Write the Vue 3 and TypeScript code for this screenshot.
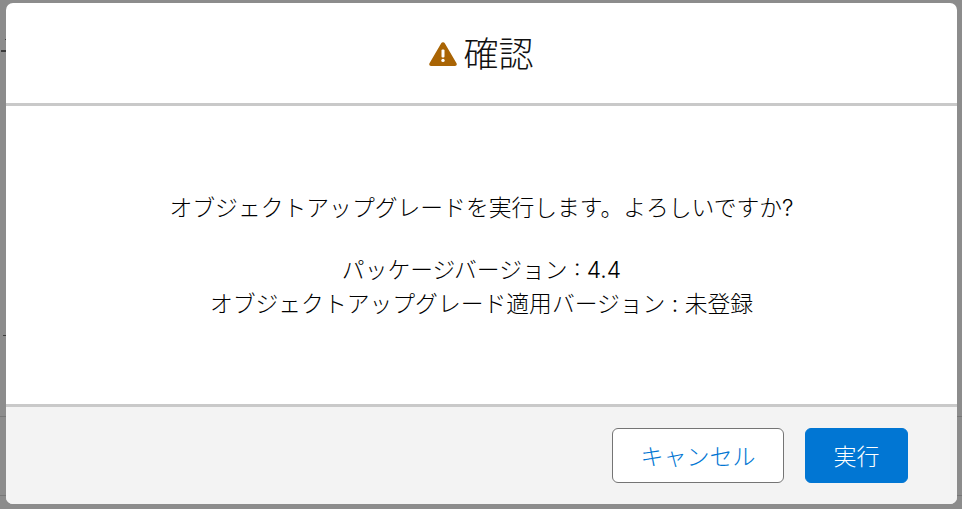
<template>
  <div class="backdrop">
    <span class="bg-mark mark-top" />
    <span class="bg-mark mark-upper" />
    <span class="bg-mark mark-mid" />
    <span class="bg-line line-a" />
    <span class="bg-line line-b" />
    <section class="modal" role="dialog" aria-modal="true">
      <header class="modal-header">
        <svg class="warn-icon" width="28" height="24" viewBox="0 0 28 24" aria-hidden="true">
          <path
            d="M14 .3c-.8 0-1.4.4-1.8 1L.5 21.3c-.7 1.2.1 2.7 1.5 2.7h24c1.4 0 2.2-1.5 1.5-2.7L15.8 1.3c-.4-.6-1-1-1.8-1z"
            fill="#a96404"
          />
          <rect x="12.5" y="7.5" width="3" height="8" rx="1" fill="#fff" />
          <circle cx="14" cy="18.4" r="1.7" fill="#fff" />
        </svg>
        <h2 class="title">確認</h2>
      </header>
      <div class="modal-body">
        <p class="lead">{{ message }}</p>
        <p v-for="line in details" :key="line" class="detail">{{ line }}</p>
      </div>
      <footer class="modal-footer">
        <button type="button" class="btn btn-neutral">キャンセル</button>
        <button type="button" class="btn btn-brand">実行</button>
      </footer>
    </section>
  </div>
</template>

<script setup lang="ts">
const message = 'オブジェクトアップグレードを実行します。よろしいですか?'
const details: string[] = [
  'パッケージバージョン : 4.4',
  'オブジェクトアップグレード適用バージョン : 未登録',
]
</script>

<style>
html,
body {
  margin: 0;
  background: #8c8c8c;
}
</style>

<style scoped>
.backdrop {
  position: relative;
  box-sizing: border-box;
  width: 962px;
  height: 509px;
  padding: 3px 5px 5px 6px;
  overflow: hidden;
  background: #8c8c8c;
  font-family: "Inter", "Noto Sans CJK JP", sans-serif;
  color: #181818;
}
.bg-mark {
  position: absolute;
  left: 0;
  background: #3a3a3a;
}
.mark-top {
  top: 39px;
  left: 5px;
  width: 1px;
  height: 1px;
}
.mark-upper {
  top: 50px;
  left: 1px;
  width: 5px;
  height: 2px;
}
.mark-mid {
  top: 335px;
  left: 3px;
  width: 3px;
  height: 1px;
}
.bg-line {
  position: absolute;
  left: 0;
  right: 0;
  height: 1px;
  background: #777;
}
.line-a {
  top: 416px;
}
.line-b {
  top: 495px;
}
.modal {
  position: relative;
  z-index: 1;
  display: flex;
  flex-direction: column;
  height: 501px;
  border-radius: 7px;
  overflow: hidden;
  background: #fff;
}
.modal-header {
  display: flex;
  align-items: center;
  justify-content: center;
  gap: 6px;
  height: 100px;
  border-bottom: 3px solid #c9c9c9;
}
.warn-icon {
  display: block;
  margin-top: 2px;
}
.title {
  margin: 3px 0 0;
  font-size: 35px;
  font-weight: 300;
  line-height: 1.3;
  color: #111;
}
.modal-body {
  flex: 1;
  display: flex;
  flex-direction: column;
  justify-content: center;
  padding-top: 2px;
  text-align: center;
  font-size: 22.8px;
  font-weight: 300;
  line-height: 34px;
  color: #000;
}
.lead {
  margin: 0 0 28px;
}
.detail {
  margin: 0;
}
.modal-footer {
  display: flex;
  justify-content: flex-end;
  align-items: flex-start;
  gap: 21px;
  height: 100px;
  padding: 21px 49px 0 0;
  box-sizing: border-box;
  border-top: 3px solid #c9c9c9;
  background: #f3f3f3;
}
.btn {
  height: 55px;
  padding-top: 4px;
  border-radius: 6px;
  font-family: inherit;
  font-size: 23px;
  font-weight: 300;
  line-height: 1;
  box-sizing: border-box;
}
.btn-neutral {
  width: 172px;
  border: 1.5px solid #747474;
  background: #fff;
  color: #0176d3;
}
.btn-brand {
  width: 103px;
  border: 1.5px solid #0176d3;
  background: #0176d3;
  color: #fff;
}
</style>
